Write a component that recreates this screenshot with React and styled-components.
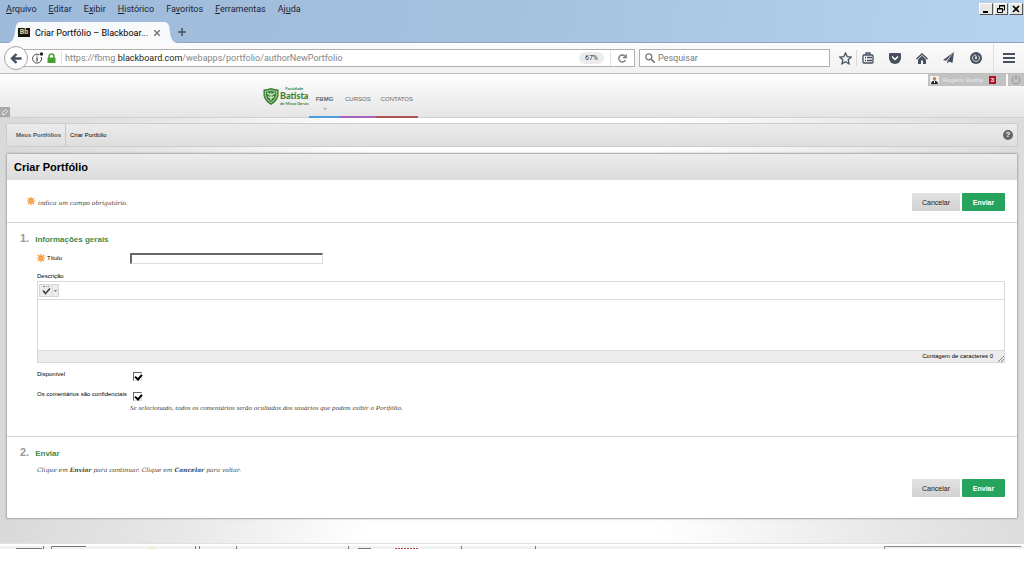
import React from 'react';
import styled, {createGlobalStyle} from 'styled-components';

const GlobalStyle = createGlobalStyle`
  * { box-sizing: border-box; }
  body {
    margin: 0;
    background: #fff;
    color: #000;
    font-family: "Liberation Sans", Arial, sans-serif;
  }
  button, input, textarea { font-family: inherit; }
`;

const Chrome = styled.div`
  background: linear-gradient(100deg, #9ebadb, #a6c1de 50%, #b7d3ee);
  font-family: Roboto, "Open Sans", sans-serif;
`;
const MenuBar = styled.div`
  display: flex;
  align-items: center;
  justify-content: space-between;
  height: 20px;
  padding: 0 1px 3px 6px;
`;
const MenuList = styled.nav`
  display: flex;
  gap: 12px;
`;
const MenuItem = styled.button`
  padding: 0;
  border: 0;
  background: none;
  color: #1b2430;
  font-size: 9px;
  line-height: 16px;
`;
const WindowButtons = styled.div`
  display: flex;
  gap: 1px;
`;
const WindowButton = styled.button`
  display: flex;
  width: 14px;
  height: 12px;
  padding: 0;
  border: 1px solid;
  border-color: #fff #555 #555 #fff;
  background: #e9e7e3;
`;
const TabStrip = styled.div`
  display: flex;
  align-items: flex-end;
  height: 23px;
  border-bottom: 1px solid #8fa5c0;
`;
const Tab = styled.div`
  display: flex;
  align-items: center;
  position: relative;
  width: 145px;
  height: 21px;
  margin: 0 0 -1px 20px;
  background: #f8f9fa;
  font-size: 9px;
`;
const TabEdge = styled.svg`
  position: absolute;
  top: 0;
  ${(props) => (props.$right ? 'right: -13px; transform: scaleX(-1);' : 'left: -13px;')}
`;
const Favicon = styled.span`
  width: 12px;
  height: 9px;
  margin-left: -2px;
  background: #17140a;
  color: #f2d98c;
  font-size: 7px;
  font-weight: 700;
  line-height: 9px;
  text-align: center;
  z-index: 1;
`;
const TabTitle = styled.span`
  flex: 1;
  margin-left: 5px;
  white-space: nowrap;
`;
const IconButton = styled.button`
  display: flex;
  align-items: center;
  justify-content: center;
  width: 16px;
  height: 16px;
  padding: 0;
  border: 0;
  background: none;
  color: #46505f;
`;
const NewTab = styled(IconButton)`
  margin: 0 0 2px 9px;
`;
const NavBar = styled.div`
  display: flex;
  align-items: center;
  height: 31px;
  padding: 0 7px 0 4px;
  border-bottom: 1px solid #bcbcbc;
  background: linear-gradient(#fbfbfb, #f1f1f1);
`;
const BackButton = styled.button`
  display: flex;
  align-items: center;
  justify-content: center;
  position: relative;
  width: 24px;
  height: 24px;
  margin-right: -4px;
  padding: 0;
  border: 1px solid #a4a4a4;
  border-radius: 50%;
  background: #fff;
`;
const AddressBar = styled.div`
  display: flex;
  flex: 1;
  align-items: center;
  height: 18px;
  padding-left: 7px;
  border: 1px solid #b0b0b0;
  background: #fff;
`;
const Address = styled.span`
  flex: 1;
  margin-left: 3px;
  padding-left: 3px;
  border-left: 1px solid #e2e2e2;
  color: #858585;
  font-size: 9px;
  line-height: 14px;
  white-space: nowrap;
  b { color: #222; font-weight: 400; }
`;
const Zoom = styled.span`
  padding: 0 6px;
  border-radius: 7px;
  background: #ececec;
  color: #333;
  font-size: 7px;
  line-height: 12px;
`;
const Reload = styled(IconButton)`
  width: 24px;
  margin-left: 6px;
  border-left: 1px solid #e5e5e5;
`;
const SearchBox = styled.label`
  display: flex;
  align-items: center;
  width: 191px;
  height: 18px;
  margin: 0 7px 0 4px;
  padding-left: 5px;
  border: 1px solid #b0b0b0;
  background: #fff;
  input {
    flex: 1;
    margin-left: 3px;
    padding: 0;
    border: 0;
    outline: none;
    background: transparent;
    font-size: 9px;
  }
  input::placeholder { color: #777; opacity: 1; }
`;
const Tools = styled.div`
  display: flex;
  align-items: center;
  gap: 11px;
`;
const Bookmarks = styled.div`
  display: flex;
  gap: 3px;
  button + button {
    width: 20px;
    padding-left: 2px;
    border-left: 1px solid #d9d9d9;
  }
`;
const MenuTool = styled(IconButton)`
  width: 24px;
  height: 29px;
  margin-left: -2px;
  padding-left: 6px;
  border-left: 1px solid #e0e0e0;
`;

const Page = styled.div`
  background: linear-gradient(90deg, #d9d9d9, #e8e8e8 18%, #fff 36%, #fff 64%, #e8e8e8 86%, #dcdcdc);
`;
const Header = styled.header`
  display: flex;
  position: relative;
  height: 44px;
  border-bottom: 1px solid #cfcfcf;
  background: linear-gradient(#fefefe, #e5e5e5);
`;
const Brand = styled.a`
  display: flex;
  align-items: center;
  width: 46px;
  height: 44px;
  margin-left: 263px;
  color: #3b8234;
  text-decoration: none;
`;
const BrandName = styled.span`
  display: flex;
  flex-direction: column;
  font-family: Lato, sans-serif;
  font-size: 4px;
  font-weight: 700;
  line-height: 5px;
  text-align: center;
  white-space: nowrap;
  b { font-size: 9px; font-weight: 900; line-height: 10px; }
`;
const HeaderLink = styled.a`
  min-width: 31px;
  height: 44px;
  padding: 20px 5px 0;
  border-bottom: 2px solid ${(props) => props.$color};
  color: #666;
  font-size: 6px;
  font-weight: ${(props) => (props.$active ? 700 : 400)};
  line-height: 10px;
  text-align: center;
  text-decoration: none;
  svg { display: block; margin: 4px auto 0; }
`;
const UserBar = styled.div`
  display: flex;
  gap: 2px;
  position: absolute;
  top: 0;
  right: 0;
`;
const UserButton = styled.button`
  display: flex;
  align-items: center;
  gap: 4px;
  height: 12px;
  padding: ${(props) => (props.$wide ? '0 10px 0 2px' : '0 3px')};
  border: 0;
  background: #c2c2c2;
  color: #ececec;
  font-size: 6px;
`;
const Count = styled.span`
  width: 7px;
  margin-left: 2px;
  background: #b3121d;
  color: #fff;
  font-weight: 700;
  line-height: 8px;
  text-align: center;
`;
const EditHandle = styled.button`
  display: flex;
  position: absolute;
  bottom: 0;
  left: 0;
  padding: 1px;
  border: 0;
  background: #a9a9a9;
`;
const Main = styled.main`
  padding: 5px 6px 24px;
`;
const Breadcrumb = styled.nav`
  display: flex;
  align-items: center;
  height: 24px;
  margin-bottom: 6px;
  padding: 0 4px 0 9px;
  border: 1px solid #cdcdcd;
  background: linear-gradient(#ebebeb, #dedede);
  font-size: 6px;
  line-height: 22px;
  a {
    padding-right: 4px;
    border-right: 1px solid #c8c8c8;
    color: #555;
    font-weight: 700;
    text-decoration: none;
  }
  span { flex: 1; padding-left: 4px; }
`;
const HelpButton = styled.button`
  width: 10px;
  height: 10px;
  padding: 0;
  border: 0;
  border-radius: 50%;
  background: #666;
  color: #fff;
  font-size: 8px;
  font-weight: 700;
  line-height: 10px;
`;
const Panel = styled.form`
  border: 1px solid #b5b5b5;
  border-radius: 2px;
  background: #fff;
  box-shadow: 0 0 2px #aaa;
`;
const PageTitle = styled.h1`
  margin: 0;
  padding: 0 7px;
  background: linear-gradient(#ececec, #dcdcdc);
  font-size: 11px;
  line-height: 26px;
`;
const Intro = styled.div`
  display: flex;
  align-items: center;
  justify-content: space-between;
  height: 42px;
  padding: 2px 12px 0 20px;
`;
const Hint = styled.p`
  margin: 0;
  color: #444;
  font-family: "DejaVu Serif", serif;
  font-size: 6px;
  font-style: italic;
  line-height: 10px;
  svg { margin-right: 3px; }
`;
const CheckHint = styled(Hint)`
  margin-left: 93px;
  font-family: "Liberation Serif", serif;
  font-size: 7px;
`;
const Actions = styled.div`
  display: flex;
  justify-content: flex-end;
  gap: 2px;
`;
const Button = styled.button`
  height: 18px;
  width: ${(props) => (props.$primary ? 43 : 48)}px;
  padding: 0;
  border: 0;
  border-radius: 1px;
  background: ${(props) => (props.$primary ? '#26a45e' : 'linear-gradient(#e2e2e2, #d2d2d2)')};
  color: ${(props) => (props.$primary ? '#fff' : '#222')};
  font-size: 7px;
  font-weight: ${(props) => (props.$primary ? 700 : 400)};
`;
const Step = styled.section`
  padding: 9px 12px ${(props) => props.$bottom}px 13px;
  border-top: 1px solid #d3d3d3;
`;
const StepTitle = styled.h2`
  display: flex;
  align-items: baseline;
  gap: 6px;
  height: 12px;
  margin: 0;
  color: #418a4c;
  font-size: 8px;
  line-height: 12px;
  span { color: #999; font-size: 11px; }
`;
const StepBody = styled.div`
  padding-left: 17px;
`;
const StepText = styled(Hint)`
  margin: 7px 0 4px;
`;
const Field = styled.div`
  display: flex;
  align-items: center;
  height: 28px;
`;
const Label = styled.label`
  display: block;
  width: 93px;
  font-size: 6px;
  line-height: 9px;
  white-space: nowrap;
  svg { margin-right: 2px; vertical-align: middle; }
`;
const TextInput = styled.input`
  width: 193px;
  height: 11px;
  padding: 0 2px;
  border: 1px solid;
  border-color: #666 #ddd #ddd #666;
  border-width: 2px 1px 1px 2px;
  outline: none;
  font-size: 8px;
`;
const Editor = styled.div`
  border: 1px solid #d9d9d9;
  background: #fff;
`;
const EditorBar = styled.div`
  height: 18px;
  padding: 2px 1px;
  border-bottom: 1px solid #d9d9d9;
`;
const SpellButton = styled.button`
  display: flex;
  width: 20px;
  height: 13px;
  padding: 0;
  border: 1px solid #d5d5d5;
  background: #ececec;
`;
const EditorArea = styled.textarea`
  display: block;
  width: 100%;
  height: 50px;
  padding: 2px;
  border: 0;
  outline: none;
  resize: none;
  font-size: 8px;
`;
const EditorFooter = styled.div`
  display: flex;
  align-items: flex-end;
  justify-content: flex-end;
  gap: 5px;
  height: 12px;
  border-top: 1px solid #d9d9d9;
  background: #ececec;
  font-size: 6px;
  line-height: 11px;
`;
const Options = styled.div`
  display: flex;
  flex-direction: column;
  gap: 6px;
  padding-top: 6px;
`;
const Option = styled.div`
  display: flex;
  align-items: flex-start;
  height: 14px;
  label { line-height: 11px; }
`;
const Check = styled.input`
  appearance: none;
  width: 9px;
  height: 9px;
  margin: 3px 0 0 3px;
  border: 1px solid;
  border-color: #666 #ddd #ddd #666;
  background: #fff;
  &:checked::after {
    display: block;
    width: 3px;
    height: 5px;
    margin: 0 0 0 2px;
    border: solid #000;
    border-width: 0 2px 2px 0;
    content: "";
    transform: rotate(40deg);
  }
`;
const TaskBar = styled.footer`
  display: flex;
  justify-content: space-between;
  height: 6px;
  border-top: 1px solid #e0e0e0;
  background: linear-gradient(#fff 2px, #f1f1f1 2px);
`;

const Star = () => (
  <svg width="8" height="8" viewBox="0 0 8 8" stroke="#f58a1f" strokeWidth="1.2">
    <path d="M4 0v3.400M4 4.600v3.400M0 4h3.400M4.600 4h3.400M1 1l2.400 2.400M4.600 4.600L7 7M7 1L4.600 3.400M3.400 4.600L1 7" />
  </svg>
);

const menus = [
  ['', 'A', 'rquivo'],
  ['', 'E', 'ditar'],
  ['E', 'x', 'ibir'],
  ['', 'H', 'istórico'],
  ['Fa', 'v', 'oritos'],
  ['', 'F', 'erramentas'],
  ['Aj', 'u', 'da'],
];

const FormActions = () => (
  <Actions>
    <Button type="button">Cancelar</Button>
    <Button type="submit" $primary>Enviar</Button>
  </Actions>
);

const edgePath = 'M15 0C8 0 9 5 8 10C7 17 5 21 0 21H15z';

const Browser = () => (
  <Chrome>
    <MenuBar>
      <MenuList>
        {menus.map(([before, key, after]) => (
          <MenuItem key={after}>{before}<u>{key}</u>{after}</MenuItem>
        ))}
      </MenuList>
      <WindowButtons>
        <WindowButton aria-label="Minimizar">
          <svg width="12" height="10"><path d="M3 8h5" stroke="#000" strokeWidth="2" /></svg>
        </WindowButton>
        <WindowButton aria-label="Restaurar">
          <svg width="12" height="10" fill="none" stroke="#000">
            <path d="M4.500 4V1.500h5V6H8M4 2h6M2.500 4.500h5v4h-5zM2 5h6" />
          </svg>
        </WindowButton>
        <WindowButton aria-label="Fechar">
          <svg width="12" height="10"><path d="M3 2l6 6M9 2L3 8" stroke="#000" strokeWidth="1.700" /></svg>
        </WindowButton>
      </WindowButtons>
    </MenuBar>
    <TabStrip>
      <Tab>
        <TabEdge width="15" height="21"><path d={edgePath} fill="#f8f9fa" /></TabEdge>
        <TabEdge $right width="15" height="21"><path d={edgePath} fill="#f8f9fa" /></TabEdge>
        <Favicon>Bb</Favicon>
        <TabTitle>Criar Portfólio – Blackboar...</TabTitle>
        <IconButton aria-label="Fechar aba">
          <svg width="6" height="6" stroke="#777" strokeWidth="1.500"><path d="M0 0l6 6M6 0L0 6" /></svg>
        </IconButton>
      </Tab>
      <NewTab aria-label="Nova aba">
        <svg width="8" height="8" stroke="#46505f" strokeWidth="1.500"><path d="M4 0v8M0 4h8" /></svg>
      </NewTab>
    </TabStrip>
    <NavBar>
      <BackButton aria-label="Voltar">
        <svg width="12" height="11" fill="none" stroke="#46505f" strokeWidth="2.400">
          <path d="M11.500 5.500H2M6.500 1L2 5.500L6.500 10" />
        </svg>
      </BackButton>
      <AddressBar>
        <svg width="12" height="12" fill="none" stroke="#444">
          <path d="M7.500 2.800A4.500 4.500 0 1 0 9.300 5" />
          <path d="M5 5.500V9.500M5 3.500v1" strokeWidth="1.300" />
          <circle cx="9.500" cy="2" r="1.700" fill="#222" stroke="none" />
        </svg>
        <svg width="14" height="11">
          <path d="M5 5V3.500a2.500 2.500 0 0 1 5 0V5" fill="none" stroke="#48a031" strokeWidth="1.500" />
          <rect x="3.500" y="4.500" width="8" height="5.500" rx=".5" fill="#48a031" />
        </svg>
        <Address>https://fbmg.<b>blackboard.com</b>/webapps/portfolio/authorNewPortfolio</Address>
        <Zoom>67%</Zoom>
        <Reload aria-label="Recarregar">
          <svg width="9" height="9" fill="none" stroke="#778" strokeWidth="1.300">
            <path d="M7.500 6a3.500 3.500 0 1 1-.3-3.500M8.200 .3v3.200H5" />
          </svg>
        </Reload>
      </AddressBar>
      <SearchBox>
        <svg width="10" height="10" fill="none" stroke="#777" strokeWidth="1.300">
          <circle cx="3.800" cy="3.800" r="3" />
          <path d="M6 6l3.700 3.700" strokeWidth="1.700" />
        </svg>
        <input aria-label="Pesquisar" placeholder="Pesquisar" />
      </SearchBox>
      <Tools>
        <Bookmarks>
          <IconButton aria-label="Favoritar">
            <svg width="13" height="13" fill="none" stroke="currentColor" strokeWidth="1.300">
              <path d="M6.500 1l1.700 3.600 3.900.5-2.900 2.700.8 4-3.500-2-3.500 2 .8-4L.9 5.100l3.900-.5z" />
            </svg>
          </IconButton>
          <IconButton aria-label="Lista de favoritos">
            <svg width="12" height="12" fill="none" stroke="currentColor" strokeWidth="1.300">
              <rect x="1" y="3" width="10" height="8" rx="1" />
              <path d="M4 3V1h4v2M3 5.500h1M5 5.500h5M3 8.500h1M5 8.500h5" />
            </svg>
          </IconButton>
        </Bookmarks>
        <IconButton aria-label="Pocket">
          <svg width="12" height="11">
            <path d="M1 0h10q1 0 1 1v4a6 6 0 0 1-12 0V1q0-1 1-1z" fill="currentColor" />
            <path d="M3 3.500l3 3 3-3" fill="none" stroke="#fff" strokeWidth="1.500" />
          </svg>
        </IconButton>
        <IconButton aria-label="Início">
          <svg width="12" height="11">
            <path d="M.5 6L6 1l5.500 5" fill="none" stroke="currentColor" strokeWidth="1.500" />
            <path d="M2 6.500l4-3.700 4 3.700V11H7V7.500H5V11H2z" fill="currentColor" />
          </svg>
        </IconButton>
        <IconButton aria-label="Enviar página">
          <svg width="12" height="12">
            <path d="M11 0L0 8l3 .8zM11 0L4.200 9v2.500L6 9.600l3.500 1.400z" fill="currentColor" />
          </svg>
        </IconButton>
        <IconButton aria-label="Sincronizar">
          <svg width="12" height="12">
            <circle cx="6" cy="6" r="6" fill="currentColor" />
            <path d="M3.500 3.500a3.500 3.500 0 1 0 5 0" fill="none" stroke="#cfd5dc" />
            <path d="M4 2.500l2.500 1.500M6 4v2" fill="none" stroke="#cfd5dc" />
            <circle cx="6" cy="6" r="1.200" fill="#cfd5dc" />
          </svg>
        </IconButton>
        <MenuTool aria-label="Abrir menu">
          <svg width="12" height="10" stroke="currentColor" strokeWidth="2"><path d="M0 1h12M0 5h12M0 9h12" /></svg>
        </MenuTool>
      </Tools>
    </NavBar>
  </Chrome>
);

const SiteHeader = () => (
  <Header>
    <Brand href="#">
      <svg width="17" height="17" viewBox="0 0 17 18">
        <path d="M0 1.500Q4 1.500 8 0Q12 1.500 16 1.500V8Q15 14 8 18Q1 14 0 8z" fill="#3b8234" />
        <path d="M2 3.500Q5 3.400 8 2.300Q11 3.400 14 3.500V8Q13 12.500 8 15.500Q3 12.500 2 8z" fill="none" stroke="#d8ead2" strokeWidth=".8" />
        <path d="M4 5l3 2.500M12 5L9 7.500M8 5v8M5 9l3 2 3-2" fill="none" stroke="#e6f2e2" strokeWidth="1.200" />
      </svg>
      <BrandName>Faculdade<b>Batista</b>de Minas Gerais</BrandName>
    </Brand>
    <HeaderLink href="#" $active $color="#4b9fe0">
      FBMG
      <svg width="4" height="2"><path d="M0 0h4L2 2z" fill="#aaa" /></svg>
    </HeaderLink>
    <HeaderLink href="#" $color="#a863b8">CURSOS</HeaderLink>
    <HeaderLink href="#" $color="#ab5552">CONTATOS</HeaderLink>
    <UserBar>
      <UserButton $wide>
        <svg width="9" height="8">
          <path d="M0 0h9v8H0z" fill="#f2efec" />
          <circle cx="4.500" cy="2.700" r="1.700" fill="#b98465" />
          <path d="M1 8Q1 5 4.500 4.800Q8 5 8 8z" fill="#222" />
          <path d="M4 5h1v2H4z" fill="#fff" />
        </svg>
        Rogerio Rocha
        <Count>3</Count>
      </UserButton>
      <UserButton aria-label="Sair">
        <svg width="10" height="10" fill="none" stroke="#969696">
          <path d="M3 1.500a4 4 0 1 0 4 0M5 0v5" />
        </svg>
      </UserButton>
    </UserBar>
    <EditHandle aria-label="Mostrar menu do curso">
      <svg width="8" height="8" fill="none" stroke="#eee">
        <path d="M1.500 6.500v-2l3-3 2 2-3 3z" />
      </svg>
    </EditHandle>
  </Header>
);

export default function App() {
  return (
    <>
      <GlobalStyle />
      <Browser />
      <Page>
        <SiteHeader />
        <Main>
          <Breadcrumb>
            <a href="#">Meus Portfólios</a>
            <span>Criar Portfólio</span>
            <HelpButton>?</HelpButton>
          </Breadcrumb>
          <Panel>
            <PageTitle>Criar Portfólio</PageTitle>
            <Intro>
              <Hint><Star />indica um campo obrigatório.</Hint>
              <FormActions />
            </Intro>
            <Step $bottom={23}>
              <StepTitle><span>1.</span>Informações gerais</StepTitle>
              <StepBody>
                <Field>
                  <Label htmlFor="title"><Star />Título</Label>
                  <TextInput id="title" />
                </Field>
                <Label htmlFor="description">Descrição</Label>
                <Editor>
                  <EditorBar>
                    <SpellButton type="button" aria-label="Ortografia">
                      <svg width="18" height="11" fill="none">
                        <path d="M3 1.500h2M6 1.500h1M8 1.500h1" stroke="#888" />
                        <path d="M3 5.500L5.500 8.500L10 3.500" stroke="#444" strokeWidth="1.700" />
                        <path d="M12.500 0v11" stroke="#ddd" />
                        <path d="M14 5h3l-1.500 2z" fill="#777" />
                      </svg>
                    </SpellButton>
                  </EditorBar>
                  <EditorArea id="description" />
                  <EditorFooter>
                    Contagem de caracteres 0
                    <svg width="6" height="6" stroke="#888"><path d="M0 6L6 0M3 6L6 3" /></svg>
                  </EditorFooter>
                </Editor>
                <Options>
                  <Option>
                    <Label htmlFor="available">Disponível</Label>
                    <Check id="available" type="checkbox" defaultChecked />
                  </Option>
                  <Option>
                    <Label htmlFor="private">Os comentários são confidenciais</Label>
                    <Check id="private" type="checkbox" defaultChecked />
                  </Option>
                </Options>
                <CheckHint>
                  Se selecionado, todos os comentários serão ocultados dos usuários que podem exibir o Portfólio.
                </CheckHint>
              </StepBody>
            </Step>
            <Step $bottom={21}>
              <StepTitle><span>2.</span>Enviar</StepTitle>
              <StepBody>
                <StepText>Clique em <b>Enviar</b> para continuar. Clique em <b>Cancelar</b> para voltar.</StepText>
              </StepBody>
              <FormActions />
            </Step>
          </Panel>
        </Main>
      </Page>
      <TaskBar>
        {/* tops of the buttons on the cut off Windows task bar */}
        <svg width="560" height="5" fill="none" stroke="#777">
          <path d="M16 4.500h26M51.500 5V2.500H86M43.500 5V2M195.500 5V2M199.500 5V2M236.500 5V2M348.500 5V2M461.500 5V2M535.500 5V2M358 4.500h13" />
          <path d="M148 4.500h8" stroke="#f3e9a0" />
          <path d="M395 4.500h23" stroke="#b04848" strokeDasharray="2 1" />
        </svg>
        <svg width="140" height="5" fill="none" stroke="#888"><path d="M.5 5V2.500H137" /></svg>
      </TaskBar>
    </>
  );
}
